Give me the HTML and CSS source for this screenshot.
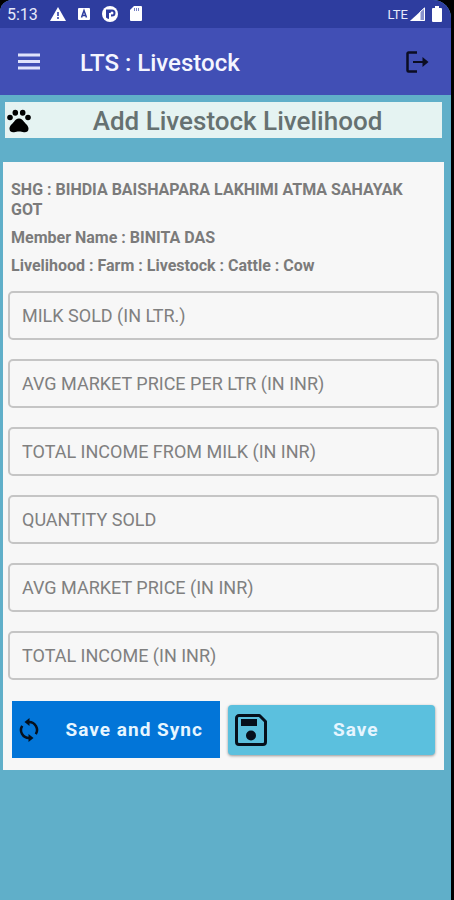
FILE: index.html
```html
<!DOCTYPE html>
<html lang="en">
<head>
<meta charset="utf-8">
<meta name="viewport" content="width=device-width, initial-scale=1">
<title>LTS : Livestock</title>
<link rel="stylesheet" href="styles.css">
</head>
<body>
<div class="screen">
  <div class="status">
    <span class="clock">5:13</span>
    <svg width="16" height="16" viewBox="0 0 16 16"><path fill="#fff" d="M8 1l8 14H0z"/><path fill="#5a68bb" d="M7 6h2v4H7zM7 11h2v2H7z"/></svg>
    <svg width="12" height="16" viewBox="0 0 12 16"><rect y="2" width="12" height="12" rx="1" fill="#fff"/><path fill="none" stroke="#2e3d9f" stroke-width="1.5" d="M3.500 11.500L6 4.500l2.500 7M4.500 9.500h3"/></svg>
    <svg width="16" height="16" viewBox="0 0 16 16"><circle cx="8" cy="8" r="8" fill="#fff"/><path fill="#2e3d9f" d="M4 3.500h6a3.500 3.500 0 0 1 0 7H9V7H7v6a5.500 5.500 0 0 1-3-1.500z"/><circle cx="10" cy="7" r="1.500" fill="#fff"/></svg>
    <svg width="12" height="16" viewBox="0 0 12 16"><path fill="#fff" d="M4 0h7a1 1 0 0 1 1 1v13a1 1 0 0 1-1 1H1a1 1 0 0 1-1-1V4z"/><path stroke="#7580c4" d="M4.500 2v3M6.500 2v3M8.500 2v3"/></svg>
    <span class="network">LTE</span>
    <svg width="15" height="14" viewBox="0 0 15 14"><path fill="#8993cd" d="M15 0v14H0z"/><path fill="#fff" d="M10 5v9H0z"/><path fill="none" stroke="#fff" d="M14.500 1v12.500H10V5z"/></svg>
    <svg class="battery" width="10" height="16" viewBox="0 0 10 16"><path fill="#fff" d="M3 0h4v2h2a1 1 0 0 1 1 1v12a1 1 0 0 1-1 1H1a1 1 0 0 1-1-1V3a1 1 0 0 1 1-1h2z"/></svg>
  </div>
  <header class="appbar">
    <button class="icon-button" type="button" aria-label="Menu"><svg width="22" height="18" viewBox="0 0 22 18"><path stroke="#dfe3fb" stroke-width="3" d="M0 2h22M0 8.500h22M0 15h22"/></svg></button>
    <h1>LTS : Livestock</h1>
    <button class="icon-button" type="button" aria-label="Log out"><svg width="24" height="22" viewBox="0 0 24 22"><path fill="none" stroke="#0b0d22" stroke-width="2.500" stroke-linejoin="round" d="M12 1.500H3.500a1 1 0 0 0-1 1v17a1 1 0 0 0 1 1H12"/><path stroke="#0b0d22" stroke-width="2" d="M8 11h12"/><path fill="#0b0d22" d="M17.500 6l6 5-6 5z"/></svg></button>
  </header>
  <main>
    <div class="banner">
      <svg width="24" height="24" viewBox="0 0 24 24"><circle cx="3" cy="8.500" r="2.800"/><ellipse cx="8.300" cy="3.800" rx="2.800" ry="3"/><ellipse cx="15.700" cy="3.800" rx="2.800" ry="3"/><circle cx="21" cy="8.500" r="2.800"/><path d="M12 9.500c2.500 0 3.700 1.600 5 3.200 1.800 2.200 4.800 4.200 4.500 7.300-.2 2.300-2 3.500-4.500 3.200-2-.2-3-.7-5-.7s-3 .5-5 .7c-2.500.3-4.300-.9-4.500-3.200-.3-3.100 2.700-5.100 4.500-7.300 1.300-1.600 2.500-3.200 5-3.200z"/></svg>
      <h2>Add Livestock Livelihood</h2>
    </div>
    <form class="card">
      <div class="details">
        <p>SHG : BIHDIA BAISHAPARA LAKHIMI ATMA SAHAYAK GOT</p>
        <p>Member Name : BINITA DAS</p>
        <p>Livelihood : Farm : Livestock : Cattle : Cow</p>
      </div>
      <div class="fields">
        <input type="text" aria-label="Milk sold in litres" placeholder="MILK SOLD (IN LTR.)">
        <input type="text" aria-label="Average market price per litre" placeholder="AVG MARKET PRICE PER LTR (IN INR)">
        <input type="text" aria-label="Total income from milk" placeholder="TOTAL INCOME FROM MILK (IN INR)">
        <input type="text" aria-label="Quantity sold" placeholder="QUANTITY SOLD">
        <input type="text" aria-label="Average market price" placeholder="AVG MARKET PRICE (IN INR)">
        <input type="text" aria-label="Total income" placeholder="TOTAL INCOME (IN INR)">
      </div>
      <div class="actions">
        <button class="sync" type="button"><svg width="20" height="24" viewBox="0 0 20 24"><path fill="none" stroke="#06101c" stroke-width="2.500" d="M10 4a8 8 0 0 1 6.800 12.200M10 20A8 8 0 0 1 3.200 7.800"/><path fill="#06101c" d="M10.500 0v8l-5-4zM9.500 16v8l5-4z"/></svg><span>Save and Sync</span></button>
        <button class="save" type="button"><svg width="32" height="32" viewBox="0 0 32 32"><path fill="none" stroke="#06101c" stroke-width="3" stroke-linejoin="round" d="M4 1.500h20.500l6 6V28a2.500 2.500 0 0 1-2.500 2.500H4A2.500 2.500 0 0 1 1.500 28V4A2.500 2.500 0 0 1 4 1.500z"/><path fill="#06101c" d="M6 5h16v7H6z"/><circle cx="16" cy="21.500" r="5" fill="#06101c"/></svg><span>Save</span></button>
      </div>
    </form>
  </main>
</div>
</body>
</html>
```
FILE: styles.css
```css
* { box-sizing: border-box; }

body {
  margin: 0;
  background: #000;
  font-family: Roboto, "Liberation Sans", sans-serif;
}

h1, h2, p { margin: 0; }

button, input { font-family: inherit; }

button {
  border: 0;
  padding: 0;
  background: none;
}

svg { display: block; flex: none; }

.screen {
  min-height: 100vh;
  margin-right: 3px;
  border-radius: 12px 18px 0 0;
  overflow: hidden;
  background: #60afc9;
}

.status {
  display: flex;
  align-items: center;
  gap: 12px;
  height: 28px;
  padding: 0 9px 0 7px;
  background: #2e3d9f;
  color: #e6e9fb;
}

.clock { font-size: 16px; }

.network {
  margin-left: auto;
  margin-right: -10px;
  font-size: 13px;
}

.battery { margin-left: -5px; }

.appbar {
  display: flex;
  align-items: center;
  height: 67px;
  padding: 0 22px 0 18px;
  background: #414fb5;
}

.appbar h1 {
  flex: 1;
  margin-left: 40px;
  padding-top: 3px;
  color: #f4f5ff;
  font-size: 24px;
  font-weight: 500;
}

main { padding: 7px 7px 0 3px; }

.banner {
  display: flex;
  align-items: center;
  height: 36px;
  margin: 0 2px;
  padding: 2px 2px 0;
  background: #e5f3f2;
}

.banner h2 {
  flex: 1;
  padding-left: 4px;
  color: #667171;
  font-size: 26px;
  font-weight: 500;
  text-align: center;
}

.card {
  margin-top: 24px;
  padding: 18px 5px 12px;
  background: #f7f7f7;
}

.details {
  display: grid;
  gap: 8px;
  padding: 0 3px;
  color: #7b7b7b;
  font-size: 16px;
  font-weight: 700;
  line-height: 20px;
}

.fields {
  display: grid;
  gap: 19px;
  margin-top: 15px;
}

.fields input {
  width: 100%;
  height: 49px;
  padding: 0 12px;
  border: 2px solid #c5c5c5;
  border-radius: 5px;
  background: transparent;
  color: #444;
  font-size: 18px;
}

.fields input::placeholder { color: #808080; opacity: 1; }

.actions {
  display: grid;
  grid-template-columns: 1fr 1fr;
  align-items: center;
  gap: 8px;
  margin-top: 21px;
  padding: 0 4px;
}

.actions button {
  display: flex;
  align-items: center;
  color: #e6f5ff;
  font-size: 19px;
  font-weight: 700;
  letter-spacing: 1px;
}

.actions span { flex: 1; }

.actions .sync {
  height: 57px;
  padding: 0 0 0 7px;
  background: #0275d8;
}

.sync span { padding-left: 10px; }

.actions .save {
  height: 50px;
  padding: 0 7px;
  border-radius: 4px;
  background: #5bc0de;
  box-shadow: 0 1px 3px #0006;
}

.save span { padding-left: 17px; }
```
